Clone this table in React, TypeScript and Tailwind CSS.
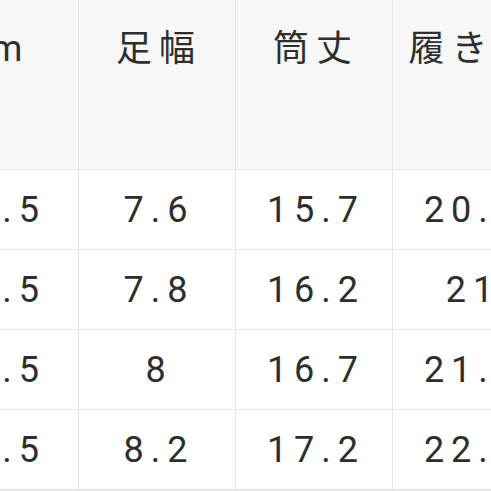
const headers = ['cm', '足幅', '筒丈', '履き口'];

const rows = [
  ['22.5', '7.6', '15.7', '20.5'],
  ['23.5', '7.8', '16.2', '21'],
  ['24.5', '8', '16.7', '21.5'],
  ['25.5', '8.2', '17.2', '22.5'],
];

export default function App() {
  return (
    <div
      className="w-[491px] h-[491px] overflow-hidden bg-[#ececec]"
      style={{ fontFamily: 'Roboto, "Noto Sans CJK JP", sans-serif' }}
    >
      <div className="ml-[-78px] w-[628px] grid grid-cols-4 text-[36px] tracking-[7px] text-[#2e2e2e] leading-none">
        {headers.map((h, i) => (
          <div
            key={i}
            className={`h-[170px] bg-[#f7f7f7] border-r border-b border-[#e6e6e6] flex justify-center pt-[31px] whitespace-nowrap ${
              i === 0 ? 'pr-[6px]' : 'pl-[4px]'
            }`}
          >
            {h}
          </div>
        ))}
        {rows.map((row, r) =>
          row.map((cell, c) => (
            <div
              key={`${r}-${c}`}
              className={`h-[80px] bg-white border-r border-b border-[#e6e6e6] flex items-center justify-center whitespace-nowrap ${
                c === 0 ? 'pr-[6px]' : 'pl-[4px]'
              }`}
            >
              {cell}
            </div>
          )),
        )}
      </div>
    </div>
  );
}
